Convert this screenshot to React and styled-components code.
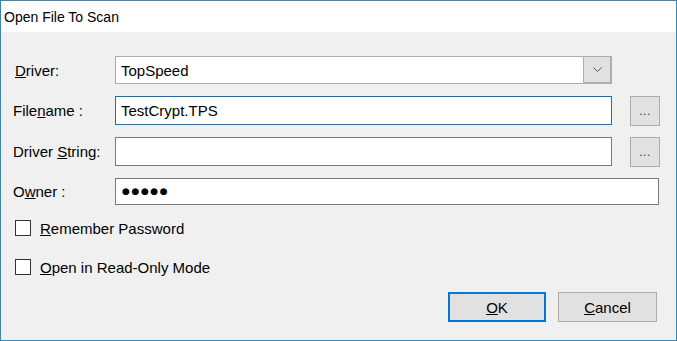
import React from 'react'
import styled, { createGlobalStyle } from 'styled-components'

const GlobalStyle = createGlobalStyle`
    html, body {
        margin: 0;
        padding: 0;
        background: #ffffff;
    }
    body {
        font-family: "Liberation Sans", Arial, sans-serif;
        color: #000;
    }
`

const fields = [
    { key: 'file', label: <>File<u>n</u>ame :</>, value: 'TestCrypt.TPS', focused: true, h: 29 },
    { key: 'str', label: <>Driver <u>S</u>tring:</>, value: '', h: 29 },
]

function App() {
    return (
        <>
            <GlobalStyle />
            <Window>
                <TitleBar>
                    <Title>Open File To Scan</Title>
                </TitleBar>
                <Body>
                    <Form>
                        <Row $h={28}>
                            <Label $indent={2}><u>D</u>river:</Label>
                            <Combo>
                                <ComboText>TopSpeed</ComboText>
                                <ComboArrow>
                                    <svg width="9" height="5" viewBox="0 0 9 5">
                                        <polyline points="0.5,0.5 4.5,4.5 8.5,0.5" fill="none" stroke="#555" strokeWidth="1" />
                                    </svg>
                                </ComboArrow>
                            </Combo>
                        </Row>

                        {fields.map(f => (
                            <Row key={f.key} $h={f.h}>
                                <Label>{f.label}</Label>
                                <Input $focused={f.focused} readOnly value={f.value} />
                                <BrowseButton $h={f.h + 1}>...</BrowseButton>
                            </Row>
                        ))}

                        <Row $h={27}>
                            <Label>O<u>w</u>ner :</Label>
                            <PasswordBox>
                                <Dots>●●●●●</Dots>
                            </PasswordBox>
                        </Row>
                    </Form>

                    <CheckList>
                        <CheckRow>
                            <Box />
                            <CheckText><u>R</u>emember Password</CheckText>
                        </CheckRow>
                        <CheckRow>
                            <Box />
                            <CheckText><u>O</u>pen in Read-Only Mode</CheckText>
                        </CheckRow>
                    </CheckList>

                    <ButtonBar>
                        <DialogButton $default $w={98}><u>O</u>K</DialogButton>
                        <DialogButton $w={99}><u>C</u>ancel</DialogButton>
                    </ButtonBar>
                </Body>
            </Window>
        </>
    )
}

const Window = styled.div`
    width: 677px;
    height: 341px;
    box-sizing: border-box;
    border: 1px solid #3a88b0;
    display: flex;
    flex-direction: column;
    background: #f0f0f0;
`

const TitleBar = styled.div`
    height: 31px;
    flex: none;
    background: #ffffff;
    display: flex;
    align-items: center;
    padding-left: 3px;
`

const Title = styled.div`
    font-size: 14px;
    color: #000;
    padding-top: 1px;
`

const Body = styled.div`
    flex: 1;
    display: flex;
    flex-direction: column;
    padding: 24px 0 0 12px;
    font-size: 15px;
    line-height: 17px;
`

const Form = styled.div`
    display: flex;
    flex-direction: column;
    gap: 12px;
`

const Row = styled.div`
    display: flex;
    align-items: center;
    height: ${p => p.$h}px;
`

const Label = styled.div`
    width: 102px;
    flex: none;
    box-sizing: border-box;
    padding-left: ${p => p.$indent || 0}px;
    white-space: nowrap;
`

const Combo = styled.div`
    width: 497px;
    height: 100%;
    box-sizing: border-box;
    border: 1px solid #adadad;
    background: #fff;
    display: flex;
    align-items: center;
`

const ComboText = styled.div`
    flex: 1;
    padding-left: 5px;
`

const ComboArrow = styled.div`
    width: 28px;
    height: 100%;
    box-sizing: border-box;
    background: #e1e1e1;
    border-left: 1px solid #adadad;
    border-right: 1px solid #adadad;
    border-bottom: 1px solid #adadad;
    display: flex;
    align-items: center;
    justify-content: center;
`

const Input = styled.input`
    width: 497px;
    height: 100%;
    box-sizing: border-box;
    border: 1px solid ${p => (p.$focused ? '#0078d7' : '#7a7a7a')};
    background: #fff;
    padding: 0 5px;
    margin: 0;
    font-family: "Liberation Sans", Arial, sans-serif;
    font-size: 15px;
    color: #000;
    outline: none;
`

const PasswordBox = styled.div`
    width: 544px;
    height: 100%;
    box-sizing: border-box;
    border: 1px solid #7a7a7a;
    background: #fff;
    display: flex;
    align-items: center;
    padding-left: 6px;
`

const Dots = styled.span`
    font-family: "DejaVu Sans", sans-serif;
    font-size: 9px;
    letter-spacing: 1.6px;
    color: #000;
`

const BrowseButton = styled.div`
    width: 30px;
    height: ${p => p.$h}px;
    margin-left: 18px;
    box-sizing: border-box;
    border: 1px solid #adadad;
    background: #e1e1e1;
    display: flex;
    align-items: flex-end;
    justify-content: center;
    padding-bottom: 8px;
    font-size: 12px;
    line-height: 1;
    letter-spacing: 0.5px;
    color: #4a3a20;
`

const CheckList = styled.div`
    display: flex;
    flex-direction: column;
    gap: 23px;
    margin-top: 15px;
    padding-left: 2px;
`

const CheckRow = styled.div`
    display: flex;
    align-items: center;
    height: 16px;
    gap: 9px;
`

const Box = styled.div`
    width: 16px;
    height: 16px;
    box-sizing: border-box;
    border: 1px solid #333;
    background: #fff;
`

const CheckText = styled.div`
    white-space: nowrap;
`

const ButtonBar = styled.div`
    display: flex;
    justify-content: flex-end;
    gap: 12px;
    margin-top: 17px;
    padding-right: 19px;
`

const DialogButton = styled.div`
    width: ${p => p.$w}px;
    height: 30px;
    box-sizing: border-box;
    border: ${p => (p.$default ? '2px solid #0078d7' : '1px solid #adadad')};
    background: #e1e1e1;
    display: flex;
    align-items: center;
    justify-content: center;
`

export default App
